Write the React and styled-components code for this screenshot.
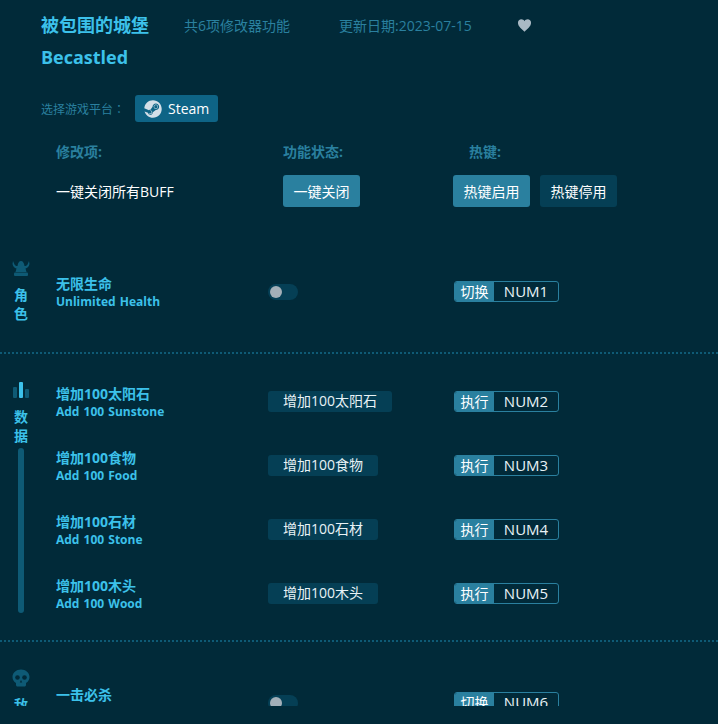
import React from 'react';
import styled, { createGlobalStyle } from 'styled-components';
import { FaSteam } from 'react-icons/fa';

const GlobalStyle = createGlobalStyle`
  html, body {
    margin: 0;
    padding: 0;
    background: #012a39;
  }
  * {
    box-sizing: border-box;
  }
`;

const Page = styled.div`
  width: 718px;
  height: 706px;
  overflow: hidden;
  background: #012a39;
  font-family: "Open Sans", "Noto Sans CJK SC", sans-serif;
  font-size: 14px;
  color: #fff;
`;

const Header = styled.header`
  height: 232px;
  padding: 13px 0 0 41px;
`;

const TitleRow = styled.div`
  display: flex;
  align-items: center;
  height: 24px;
`;

const Title = styled.h1`
  margin: 0;
  font-size: 18px;
  font-weight: 700;
  line-height: 24px;
  color: #3cc1ea;
`;

const Meta = styled.span`
  font-size: 14px;
  color: #2a809f;
  margin-left: ${(p) => p.$gap}px;
`;

const Heart = styled.svg`
  width: 15px;
  height: 15px;
  margin-left: 45px;
  fill: #a9b9c4;
`;

const SubTitle = styled(Title)`
  margin-top: 8px;
`;

const PlatformRow = styled.div`
  display: flex;
  align-items: center;
  margin-top: 26px;
`;

const PlatformLabel = styled.span`
  font-family: "Noto Sans CJK TC", sans-serif;
  font-size: 12px;
  color: #2a809f;
  width: 94px;
`;

const PlatformButton = styled.button`
  display: flex;
  align-items: center;
  gap: 6px;
  height: 27px;
  width: 83px;
  padding: 0 0 0 9px;
  border: 0;
  border-radius: 3px;
  background: #0e6486;
  color: #fff;
  font: inherit;
  font-size: 14px;
  svg {
    width: 18px;
    height: 18px;
    color: #d3dfe8;
  }
`;

const ColumnRow = styled.div`
  display: flex;
  align-items: center;
  margin-top: 20px;
  padding-left: 15px;
  height: 18px;
`;

const ColumnLabel = styled.span`
  width: ${(p) => p.$width}px;
  font-size: 14px;
  font-weight: 700;
  color: #2a809f;
`;

const GlobalRow = styled.div`
  display: flex;
  align-items: center;
  margin-top: 15px;
  padding-left: 15px;
`;

const GlobalName = styled.span`
  width: 227px;
  font-size: 14px;
  color: #fff;
`;

const ActionButton = styled.button`
  height: 32px;
  width: 77px;
  margin-right: ${(p) => p.$right || 0}px;
  border: 0;
  border-radius: 3px;
  padding: 0;
  background: ${(p) => (p.$on ? '#2a809f' : '#053f55')};
  color: #fff;
  font: inherit;
  font-size: 14px;
`;

const Section = styled.section`
  display: flex;
  align-items: center;
  min-height: ${(p) => p.$height}px;
  padding: 16px 0 ${(p) => p.$bottom ?? 16}px;
  position: relative;
  border-bottom: 2px dotted #0e5a75;
  &:last-child {
    border-bottom: 0;
  }
`;

const Side = styled.aside`
  position: absolute;
  left: 0;
  top: 0;
  bottom: 0;
  width: 42px;
  display: flex;
  flex-direction: column;
  align-items: center;
  padding-top: 27px;
`;

const SideIcon = styled.svg`
  width: 18px;
  height: 18px;
  flex: none;
`;

const SideText = styled.div`
  width: 14px;
  margin-top: 8px;
  font-size: 14px;
  font-weight: 700;
  line-height: 19px;
  text-align: center;
  color: #3cc1ea;
`;

const SideBar = styled.div`
  flex: 1;
  width: 6px;
  margin: 3px 0 27px;
  border-radius: 3px;
  background: #0e5a75;
`;

const Rows = styled.div`
  flex: 1;
`;

const Row = styled.div`
  display: flex;
  align-items: center;
  height: 64px;
  padding-left: 56px;
`;

const Names = styled.div`
  width: 212px;
  color: #3cc1ea;
  font-weight: 700;
`;

const NameCn = styled.div`
  font-size: 14px;
  line-height: 18px;
`;

const NameEn = styled.div`
  font-size: 12px;
  line-height: 17px;
  word-spacing: 1px;
`;

const Control = styled.div`
  width: 186px;
  display: flex;
  align-items: center;
`;

const Toggle = styled.div`
  width: 30px;
  height: 16px;
  padding: 2px;
  border-radius: 8px;
  background: #053f55;
`;

const Knob = styled.div`
  width: 12px;
  height: 12px;
  border-radius: 50%;
  background: #a3afb8;
`;

const RunButton = styled.div`
  height: 21px;
  margin-bottom: 2px;
  padding: 0 15px;
  border-radius: 3px;
  background: #053f55;
  color: #e8f2f6;
  font-size: 14px;
  line-height: 20px;
`;

const Hotkey = styled.div`
  display: flex;
  width: 105px;
  height: 21px;
  margin-bottom: 2px;
  border: 1px solid #2a809f;
  border-radius: 3px;
  overflow: hidden;
`;

const HotkeyTag = styled.span`
  width: 39px;
  background: #2a809f;
  color: #fff;
  font-size: 14px;
  line-height: 19px;
  text-align: center;
`;

const HotkeyKey = styled.span`
  flex: 1;
  color: #e8f2f6;
  font-size: 15px;
  line-height: 19px;
  text-align: center;
`;

const RoleIcon = () => (
  <SideIcon viewBox="0 0 18 18">
    <path
      fill="#0e5a75"
      d="M1 2l1.500 3.500C3.500 7 5 7.200 5.500 7c.3-3 1.600-5 3.500-5s3.200 2 3.500 5c.5.200 2 0 3-1.500L17 2l.5 3c-.5 2.500-2 4-4 4.500L14.500 13h-11L4.500 9.500c-2-.5-3.500-2-4-4.500z"
    />
    <rect x="2" y="13.500" width="14" height="3.500" rx="1" fill="#0e5a75" />
  </SideIcon>
);

const DataIcon = () => (
  <SideIcon viewBox="0 0 18 18">
    <rect x="1" y="6" width="4" height="11" rx="1" fill="#0e5a75" />
    <rect x="7" y="1" width="4" height="16" rx="1" fill="#3cc1ea" />
    <rect x="13" y="8" width="4" height="9" rx="1" fill="#0e5a75" />
  </SideIcon>
);

const SkullIcon = () => (
  <SideIcon viewBox="0 0 18 18">
    <path
      fill="#0e5a75"
      d="M9 .5C4.200.5.5 3.700.5 8c0 2.800 1.400 4.800 3.500 5.900V16c0 .8.700 1.500 1.500 1.500h7c.8 0 1.500-.7 1.500-1.500v-2.100c2.100-1.100 3.500-3.100 3.500-5.900C17.500 3.700 13.800.5 9 .5z"
    />
    <circle cx="5.500" cy="8.500" r="2.300" fill="#012a39" />
    <circle cx="12.500" cy="8.500" r="2.300" fill="#012a39" />
    <path fill="#012a39" d="M9 11l1.200 2.500H7.800z" />
  </SideIcon>
);

const RowItem = ({ cn, en, action, tag, hotkey }) => (
  <Row>
    <Names>
      <NameCn>{cn}</NameCn>
      {en && <NameEn>{en}</NameEn>}
    </Names>
    <Control>
      {action ? (
        <RunButton>{action}</RunButton>
      ) : (
        <Toggle>
          <Knob />
        </Toggle>
      )}
    </Control>
    <Hotkey>
      <HotkeyTag>{tag}</HotkeyTag>
      <HotkeyKey>{hotkey}</HotkeyKey>
    </Hotkey>
  </Row>
);

const dataRows = [
  { cn: '增加100太阳石', en: 'Add 100 Sunstone', hotkey: 'NUM2' },
  { cn: '增加100食物', en: 'Add 100 Food', hotkey: 'NUM3' },
  { cn: '增加100石材', en: 'Add 100 Stone', hotkey: 'NUM4' },
  { cn: '增加100木头', en: 'Add 100 Wood', hotkey: 'NUM5' },
];

export default function App() {
  return (
    <Page>
      <GlobalStyle />
      <Header>
        <TitleRow>
          <Title>被包围的城堡</Title>
          <Meta $gap={35}>共6项修改器功能</Meta>
          <Meta $gap={49}>更新日期:2023-07-15</Meta>
          <Heart viewBox="0 0 24 24">
            <path d="M12 22C8 18 1.500 13.500 1.500 7.500 1.500 4 4 2 7 2c2.200 0 4 1.100 5 3 1-1.900 2.800-3 5-3 3 0 5.500 2 5.500 5.500C22.500 13.500 16 18 12 22z" />
          </Heart>
        </TitleRow>
        <SubTitle>Becastled</SubTitle>
        <PlatformRow>
          <PlatformLabel>选择游戏平台：</PlatformLabel>
          <PlatformButton>
            <FaSteam />
            Steam
          </PlatformButton>
        </PlatformRow>
        <ColumnRow>
          <ColumnLabel $width={227}>修改项:</ColumnLabel>
          <ColumnLabel $width={186}>功能状态:</ColumnLabel>
          <ColumnLabel $width={60}>热键:</ColumnLabel>
        </ColumnRow>
        <GlobalRow>
          <GlobalName>一键关闭所有BUFF</GlobalName>
          <ActionButton $on $right={93}>一键关闭</ActionButton>
          <ActionButton $on $right={10}>热键启用</ActionButton>
          <ActionButton>热键停用</ActionButton>
        </GlobalRow>
      </Header>

      <Section $height={122}>
        <Side>
          <RoleIcon />
          <SideText>角色</SideText>
        </Side>
        <Rows>
          <RowItem cn="无限生命" en="Unlimited Health" tag="切换" hotkey="NUM1" />
        </Rows>
      </Section>

      <Section $height={288} $bottom={14}>
        <Side>
          <DataIcon />
          <SideText>数据</SideText>
          <SideBar />
        </Side>
        <Rows>
          {dataRows.map((row) => (
            <RowItem key={row.hotkey} {...row} action={row.cn} tag="执行" />
          ))}
        </Rows>
      </Section>

      <Section $height={122}>
        <Side>
          <SkullIcon />
          <SideText>敌人</SideText>
        </Side>
        <Rows>
          <RowItem cn="一击必杀" en="One Hit Kill" tag="切换" hotkey="NUM6" />
        </Rows>
      </Section>
    </Page>
  );
}
